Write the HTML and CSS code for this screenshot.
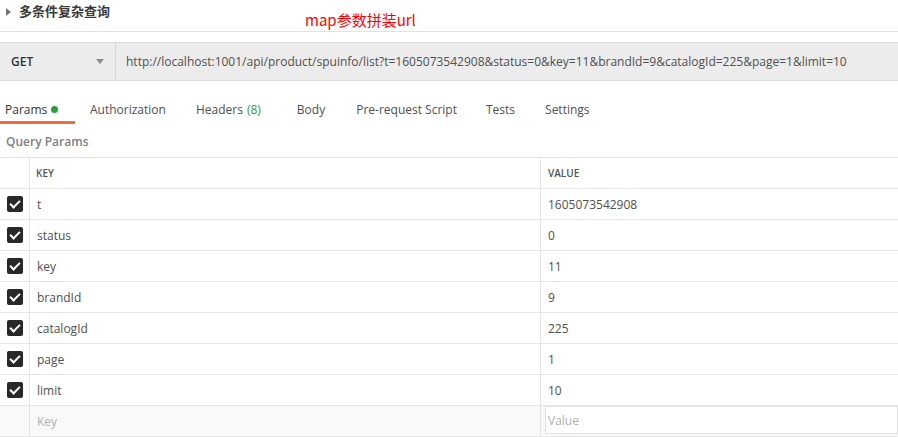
FILE: index.html
```html
<!DOCTYPE html>
<html>
<head>
<meta charset="utf-8">
<link rel="stylesheet" href="styles.css">
</head>
<body>
<div class="top">
  <span class="tri"></span>
  <span class="title">多条件复杂查询</span>
  <span class="note">map参数拼装url</span>
</div>
<div class="urlbar">
  <div class="method"><span>GET</span><span class="caret"></span></div>
  <div class="url">http://localhost:1001/api/product/spuinfo/list?t=1605073542908&amp;status=0&amp;key=11&amp;brandId=9&amp;catalogId=225&amp;page=1&amp;limit=10</div>
</div>
<div class="tabs">
  <div class="tab active">Params <span class="dot"></span></div>
  <div class="tab">Authorization</div>
  <div class="tab">Headers <span class="green">(8)</span></div>
  <div class="tab">Body</div>
  <div class="tab">Pre-request Script</div>
  <div class="tab">Tests</div>
  <div class="tab">Settings</div>
</div>
<div class="qp">Query Params</div>
<div class="table">
  <div class="row head"><div class="c0"></div><div class="c1">KEY</div><div class="c2">VALUE</div></div>
  <div class="row"><div class="c0"><span class="cb"></span></div><div class="c1">t</div><div class="c2">1605073542908</div></div>
  <div class="row"><div class="c0"><span class="cb"></span></div><div class="c1">status</div><div class="c2">0</div></div>
  <div class="row"><div class="c0"><span class="cb"></span></div><div class="c1">key</div><div class="c2">11</div></div>
  <div class="row"><div class="c0"><span class="cb"></span></div><div class="c1">brandId</div><div class="c2">9</div></div>
  <div class="row"><div class="c0"><span class="cb"></span></div><div class="c1">catalogId</div><div class="c2">225</div></div>
  <div class="row"><div class="c0"><span class="cb"></span></div><div class="c1">page</div><div class="c2">1</div></div>
  <div class="row"><div class="c0"><span class="cb"></span></div><div class="c1">limit</div><div class="c2">10</div></div>
  <div class="row empty"><div class="c0"></div><div class="c1 ph">Key</div><div class="c2"><div class="vin">Value</div></div></div>
</div>
</body>
</html>
```
FILE: styles.css
```css
* { box-sizing: border-box; }
html, body { margin: 0; padding: 0; background: #fff; }
body {
  width: 898px; height: 437px; overflow: hidden;
  font-family: "Open Sans", "Noto Sans CJK SC", sans-serif;
  font-size: 12px; color: #505050;
}
.top {
  height: 32px; border-bottom: 1px solid #e2e2e2;
  display: flex; align-items: flex-start; position: relative;
}
.tri {
  width: 0; height: 0; margin: 8px 0 0 6px;
  border-left: 5px solid #777; border-top: 4px solid transparent; border-bottom: 4px solid transparent;
}
.title {
  margin: 2px 0 0 8px; font-family: "Noto Sans CJK SC", sans-serif;
  font-size: 13px; font-weight: bold; color: #3a3a3a; line-height: 18px;
}
.note {
  position: absolute; left: 305px; top: 10px;
  font-family: "Noto Sans CJK SC", sans-serif; font-size: 15px; color: #ff0000; line-height: 20px;
}
.urlbar {
  margin-top: 10px; height: 39px; display: flex;
  background: #ececec; border-top: 1px solid #dcdcdc; border-bottom: 1px solid #dcdcdc;
}
.method {
  width: 116px; border-right: 1px solid #d6d6d6; display: flex; align-items: center;
  justify-content: space-between; padding: 0 11px 0 11px; font-size: 12px; color: #333; font-weight: 600;
}
.method .caret {
  width: 0; height: 0; border-top: 5px solid #8a8a8a; border-left: 4px solid transparent; border-right: 4px solid transparent;
}
.url { padding-left: 10px; display: flex; align-items: center; font-size: 12px; color: #505050; white-space: nowrap; }
.tabs { display: flex; height: 43px; padding-top: 20px; }
.tab {
  height: 23px; padding: 0 5px; margin-right: 14px; font-size: 12px; color: #505050;
  white-space: nowrap; display: flex; align-items: flex-start; gap: 4px;
}
.tab:nth-child(2) { margin-right: 20px; }
.tab:nth-child(3) { margin-right: 26px; }
.tab:nth-child(4) { margin-right: 21px; }
.tab:nth-child(5) { margin-right: 19px; }
.tab:nth-child(6) { margin-right: 20px; }
.tab.active { border-bottom: 3px solid #f26b3a; width: 75px; margin-right: 10px; color: #333; }
.green { color: #26a23a; }
.dot { width: 7px; height: 7px; border-radius: 50%; background: #26a23a; margin-top: 5px; }
.qp { height: 33px; padding: 9px 0 0 6px; font-size: 12px; font-weight: 600; color: #808080; }
.table { border-top: 1px solid #e4e4e4; }
.row { display: flex; height: 31px; border-bottom: 1px solid #e6e6e6; }
.row > div { display: flex; align-items: center; }
.c0 { width: 30px; border-right: 1px solid #e4e4e4; justify-content: center; }
.c1 { width: 511px; border-right: 1px solid #e4e4e4; padding-left: 7px; }
.c2 { flex: 1; padding-left: 7px; }
.head .c1, .head .c2 { font-size: 10px; font-weight: 600; color: #555; }
.head .c1 { padding-left: 6px; }
.cb {
  width: 16px; height: 16px; border-radius: 2px; background: #282828; position: relative;
}
.cb::after {
  content: ""; position: absolute; left: 5px; top: 2px; width: 4px; height: 8px;
  border-right: 2.5px solid #fff; border-bottom: 2.5px solid #fff; transform: rotate(45deg);
}
.empty { background: #f9f9f9; }
.ph { color: #b0b0b0; }
.empty .c2 { padding: 0 0 2px 4px; align-items: stretch; }
.vin {
  flex: 1; margin-top: 0; border: 1px solid #e2e2e2; background: #fff; color: #b0b0b0;
  display: flex; align-items: center; padding-left: 2px;
}
```
